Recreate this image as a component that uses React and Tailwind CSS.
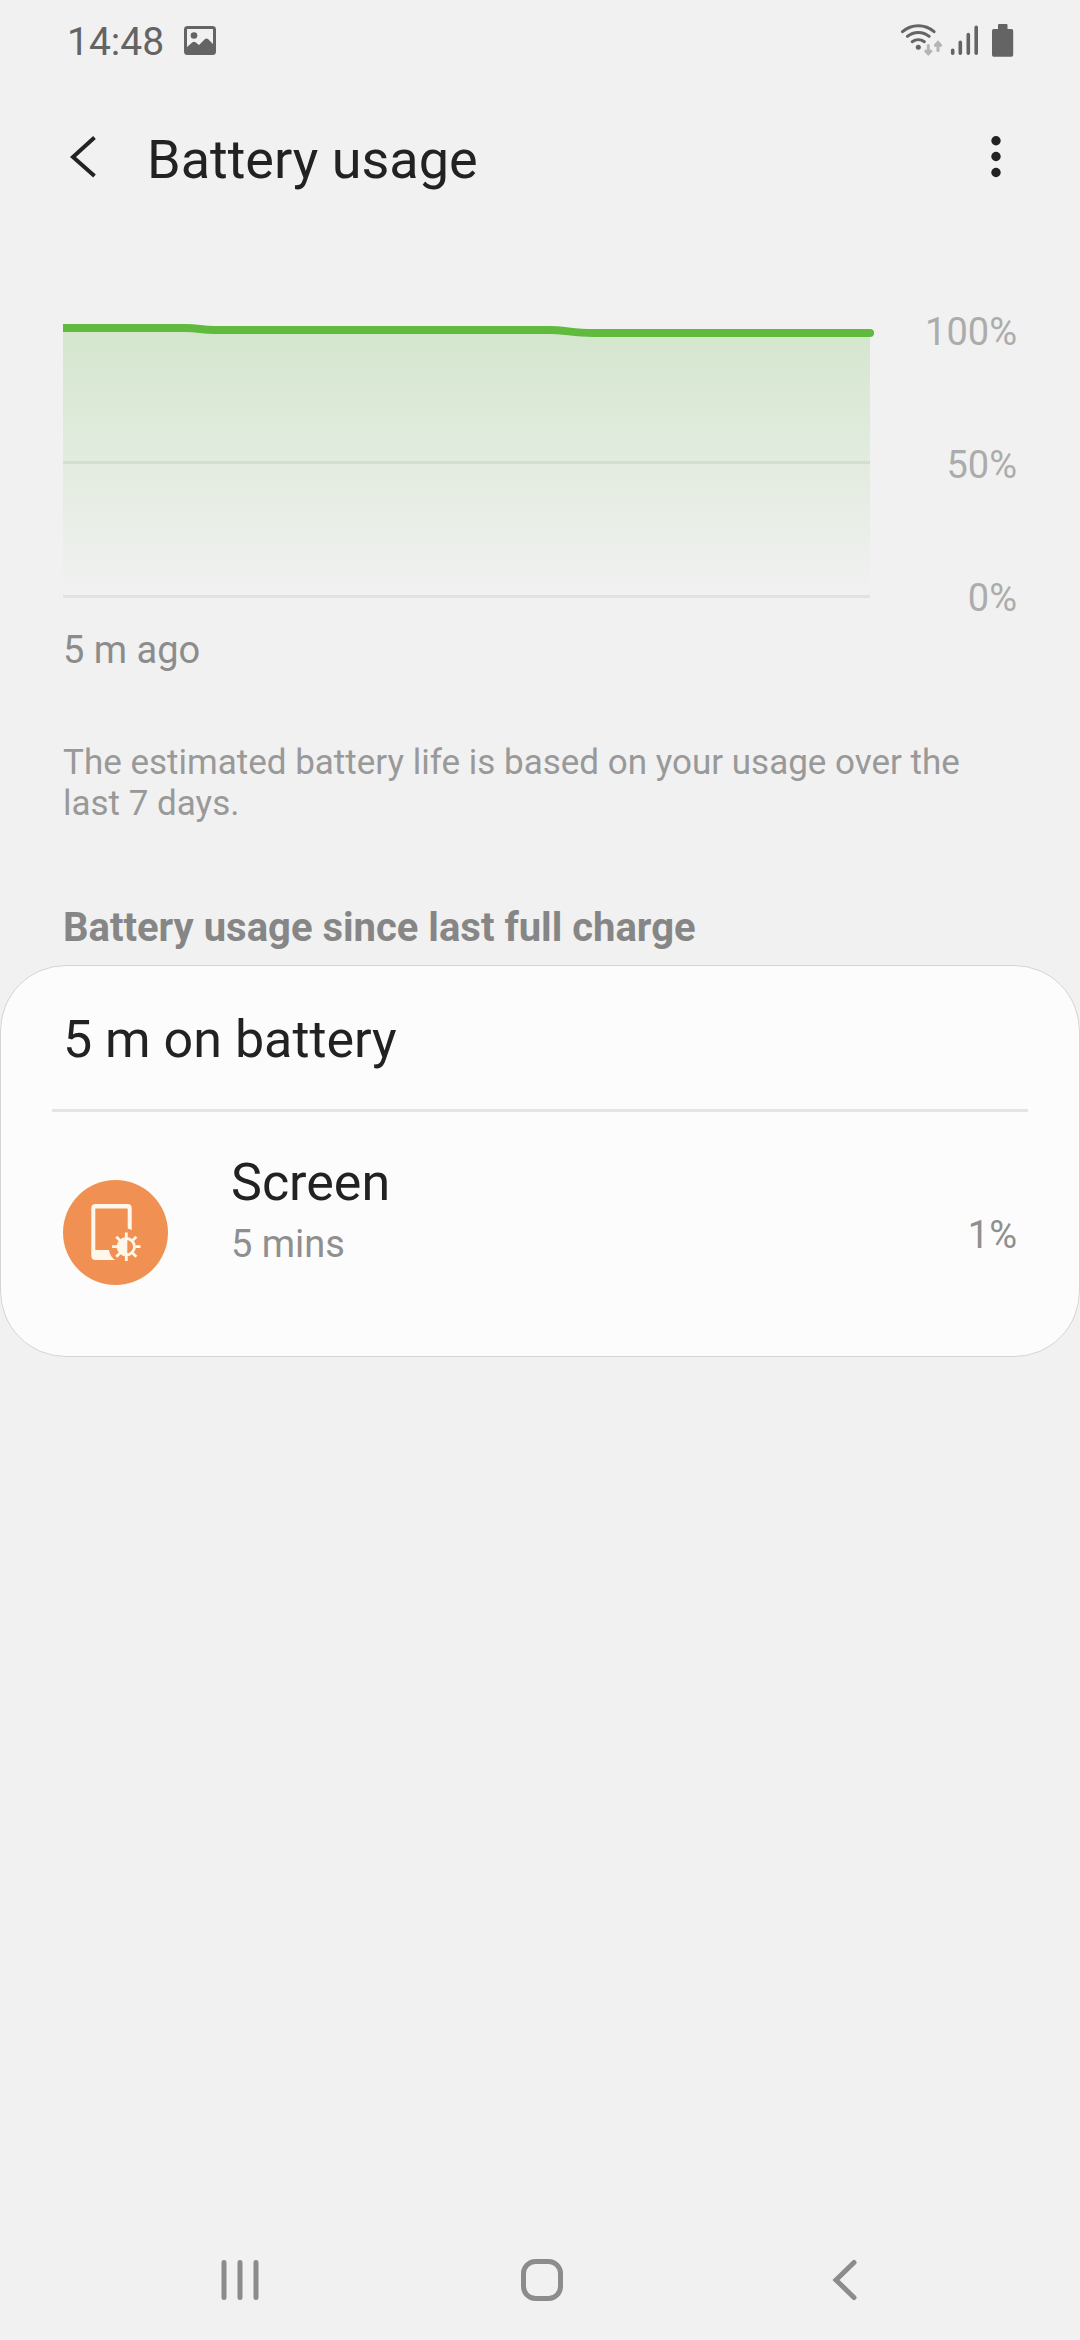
const levels = ['100%', '50%', '0%']

const apps = [{ name: 'Screen', time: '5 mins', percent: '1%' }]

function StatusBar() {
  return (
    <div className="flex h-[84px] items-center justify-between pl-[67px] pr-[66px] text-[#646464]">
      <div className="flex items-center gap-[20px]">
        <span className="text-[39px] leading-[44px]">14:48</span>
        <svg width="32" height="40" viewBox="0 0 32 40" fill="none" aria-hidden="true">
          <rect x="1.5" y="5.5" width="29" height="26" rx="2" stroke="currentColor" strokeWidth="3" />
          <circle cx="10" cy="13.5" r="3.3" fill="currentColor" />
          <path d="M3 25l5.5-4.7q1.5-1 3 0l3.5 2.7 6-6q1.5-1.2 3 0l5 5V32H3z" fill="currentColor" />
        </svg>
      </div>
      <div className="flex items-center">
        <svg className="mr-[6px]" width="44" height="40" viewBox="0 0 44 40" fill="none" strokeLinecap="round" aria-hidden="true">
          <g stroke="currentColor" strokeWidth="3">
            <path d="M2.5 9.7a24 24 0 0 1 31.6 0" />
            <path d="M7.4 14.4a17 17 0 0 1 21.8 0" />
            <path d="M12.2 19.7a10.5 10.5 0 0 1 12.2 0" />
          </g>
          <circle cx="18.3" cy="25.3" r="2.5" fill="currentColor" />
          <g stroke="#b4b4b4" strokeWidth="3">
            <path d="M28.3 23.5v8M25.7 29l2.6 2.8L30.9 29" />
            <path d="M38 28.5v-7.7M35.4 23.3l2.6-2.8 2.6 2.8" />
          </g>
        </svg>
        <svg className="mr-[14px]" width="28" height="40" viewBox="0 0 28 40" stroke="currentColor" strokeWidth="3.6" strokeLinecap="round" aria-hidden="true">
          <path d="M2.7 28.2v3M10.3 20.2v11M18.3 12.5v18.7M26.2 5.2v26" />
        </svg>
        <svg width="22" height="40" viewBox="0 0 22 40" fill="currentColor" aria-hidden="true">
          <path d="M6 3q0-1 1-1h7.5q1 0 1 1v4H19.5q1.7 0 1.7 1.7V33q0 1.7-1.7 1.7H1.7Q0 34.7 0 33V8.7Q0 7 1.7 7H6z" />
        </svg>
      </div>
    </div>
  )
}

function Header() {
  return (
    <header className="flex h-[152px] items-center pl-[63px] pr-[60px] text-[#222]">
      <button type="button" aria-label="Navigate up" className="mr-[36px]">
        <svg width="48" height="48" viewBox="0 0 48 48" fill="none" stroke="currentColor" strokeWidth="4" aria-hidden="true">
          <path d="M31.5 1.500L10 21l21.5 19" />
        </svg>
      </button>
      <h1 className="flex-1 text-[54px] leading-[62px]">Battery usage</h1>
      <button type="button" aria-label="More options">
        <svg width="48" height="48" viewBox="0 0 48 48" fill="currentColor" aria-hidden="true">
          <circle cx="24" cy="4.7" r="4.7" />
          <circle cx="24" cy="20.5" r="4.7" />
          <circle cx="24" cy="36.5" r="4.7" />
        </svg>
      </button>
    </header>
  )
}

function BatteryChart() {
  return (
    <section className="mt-[74px] px-[63px]">
      <div className="flex">
        <svg
          className="h-[310px] min-w-0 flex-1"
          viewBox="0 0 812 310"
          preserveAspectRatio="none"
          fill="none"
          role="img"
          aria-label="Battery level over the last 5 minutes"
        >
          <defs>
            <linearGradient id="level" x1="0" y1="18" x2="0" y2="285" gradientUnits="userSpaceOnUse">
              <stop offset="0" stopColor="#5fba3e" stopOpacity="0.2" />
              <stop offset="1" stopColor="#5fba3e" stopOpacity="0" />
            </linearGradient>
          </defs>
          <path d="M0 18H123Q136 18 148 20H484Q504 20 523 23H807V285H0z" fill="url(#level)" />
          <path d="M0 151H807V154H0zM0 285H807V288H0z" fill="#000" fillOpacity="0.06" />
          <path d="M0 18H123C135 18 139 20 151 20H486C502 20 510 23 530 23H807" stroke="#5fba3e" strokeWidth="8" />
          <circle cx="807" cy="23" r="4" fill="#5fba3e" />
        </svg>
        <div className="flex w-[142px] flex-col justify-between text-right text-[38px] leading-[44px] text-[#acacac]">
          {levels.map((level) => (
            <span key={level}>{level}</span>
          ))}
        </div>
      </div>
      <p className="mt-[8px] text-[38px] leading-[44px] text-[#8c8c8c]">5 m ago</p>
    </section>
  )
}

function ScreenIcon() {
  return (
    <svg className="shrink-0" width="105" height="105" viewBox="0 0 105 105" fill="none" aria-hidden="true">
      <circle cx="52.5" cy="52.5" r="52.5" fill="#f09052" />
      <path
        d="M32.5 24H64.5Q68.7 24 68.7 28.2V50L64.7 48.5V28.5H32.3V70H46Q47 76.5 52 80H32.5Q28.3 80 28.3 75.8V28.2Q28.3 24 32.5 24z"
        fill="#fff8ea"
      />
      <g stroke="#fff8ea" strokeWidth="2.8">
        <circle cx="63.3" cy="66.7" r="8.2" />
        <path d="M63.3 52.5v5M63.3 76v5M49.1 66.7h5M72.5 66.7h5M53.3 56.7l3.5 3.5M69.8 73.2l3.5 3.5M53.3 76.7l3.5-3.5M69.8 60.2l3.5-3.5" />
      </g>
      <path d="M64.3 58v17.4a8.7 8.7 0 0 1 0-17.4z" fill="#fff8ea" />
    </svg>
  )
}

function UsageCard() {
  return (
    <section className="mt-[80px]">
      <h2 className="px-[63px] text-[40px] font-bold leading-[48px] text-[#868686]">
        Battery usage since last full charge
      </h2>
      <div className="mt-[13px] rounded-[66px] border border-[#d4d4d4] bg-[#fcfcfc] px-[51px] pb-[43px]">
        <p className="border-b-3 border-[#e4e4e4] px-[11px] pb-[39px] pt-[44px] text-[52px] leading-[60px] text-[#222]">
          5 m on battery
        </p>
        <ul className="px-[11px] pt-[40px]">
          {apps.map((app) => (
            <li key={app.name} className="flex items-center">
              <ScreenIcon />
              <div className="ml-[63px] flex-1 pb-[47px]">
                <p className="text-[52px] leading-[62px] text-[#222]">{app.name}</p>
                <p className="mt-[8px] text-[38px] leading-[44px] text-[#8f8f8f]">{app.time}</p>
              </div>
              <span className="pt-[4px] text-[38px] leading-[44px] text-[#8f8f8f]">{app.percent}</span>
            </li>
          ))}
        </ul>
      </div>
    </section>
  )
}

function NavBar() {
  return (
    <nav className="mt-auto flex h-[120px] items-center pl-[89px] pr-[84px] text-[#8c8c8c]">
      <button type="button" aria-label="Recent apps" className="flex flex-1 justify-center">
        <svg width="48" height="48" viewBox="0 0 48 48" stroke="currentColor" strokeWidth="5" strokeLinecap="round" aria-hidden="true">
          <path d="M8 6.5v35M24 6.5v35M40 6.5v35" />
        </svg>
      </button>
      <button type="button" aria-label="Home" className="flex flex-1 justify-center">
        <svg width="48" height="48" viewBox="0 0 48 48" fill="none" stroke="currentColor" strokeWidth="5" aria-hidden="true">
          <rect x="5.500" y="5.500" width="37" height="37" rx="12" />
        </svg>
      </button>
      <button type="button" aria-label="Back" className="flex flex-1 justify-center">
        <svg width="48" height="48" viewBox="0 0 48 48" fill="none" stroke="currentColor" strokeWidth="5" strokeLinecap="round" aria-hidden="true">
          <path d="M33 6.5L15 24l18 17.5" />
        </svg>
      </button>
    </nav>
  )
}

export default function App() {
  return (
    <div className="flex min-h-screen flex-col bg-[#f1f1f1] font-[Roboto,sans-serif]">
      <StatusBar />
      <Header />
      <main>
        <BatteryChart />
        <p className="mt-[70px] px-[63px] text-[35px] leading-[41px] text-[#999]">
          The estimated battery life is based on your usage over the last 7 days.
        </p>
        <UsageCard />
      </main>
      <NavBar />
    </div>
  )
}
